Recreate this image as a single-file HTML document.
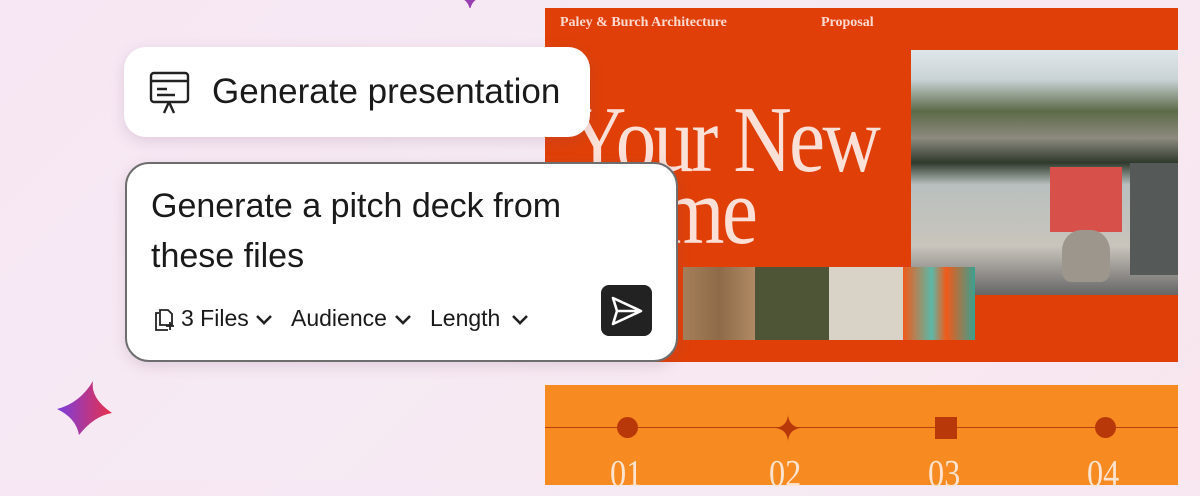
<!DOCTYPE html>
<html><head><style>
body{margin:0;width:1200px;height:480px;overflow:hidden;position:relative;background:linear-gradient(135deg,#f7e6f3 0%,#f6eaf4 40%,#f9e6ee 100%);font-family:"Liberation Sans",sans-serif}
.abs{position:absolute}
.serif{font-family:"Liberation Serif",serif}
.card{background:#fff;position:absolute;box-shadow:0 4px 14px rgba(120,80,110,.18)}
</style></head><body>
<svg class="abs" style="left:455px;top:-12px" width="30" height="20"><path d="M15 0 Q17 10 25 10 Q17 12 15 22 Q13 12 5 10 Q13 10 15 0Z" fill="#9a3fb0"/></svg>
<!-- slide -->
<div class="abs" style="left:545px;top:8px;width:633px;height:354px;background:#e04008"></div>
<div class="abs serif" style="left:560px;top:15px;color:#fbd9cf;font-size:14px;font-weight:bold">Paley &amp; Burch Architecture</div>
<div class="abs serif" style="left:821px;top:15px;color:#fbd9cf;font-size:14px;font-weight:bold">Proposal</div>
<div class="abs serif" style="left:568px;top:104px;color:#fbe0d8;font-size:94px;line-height:72px;letter-spacing:-3px;transform:scaleX(.86);transform-origin:0 0;white-space:nowrap">Your New<br>Home</div>
<div class="abs" style="left:911px;top:50px;width:267px;height:245px;background:linear-gradient(180deg,#dfe6ea 0%,#c9d3d6 12%,#5d6a48 25%,#8d8a80 36%,#2f3a2c 46%,#b9c0bf 55%,#c9c4bc 80%,#666 100%)"></div>
<div class="abs" style="left:1050px;top:167px;width:72px;height:65px;background:#d8504a"></div>
<div class="abs" style="left:1130px;top:163px;width:48px;height:112px;background:#555a58"></div>
<div class="abs" style="left:1062px;top:230px;width:48px;height:52px;background:#9c968c;border-radius:40% 40% 20% 20%"></div>
<div class="abs" style="left:683px;top:267px;width:72px;height:73px;background:linear-gradient(90deg,#a6805a,#8e6a48,#b08a65)"></div>
<div class="abs" style="left:755px;top:267px;width:74px;height:73px;background:#4e5436"></div>
<div class="abs" style="left:829px;top:267px;width:74px;height:73px;background:#d9d2c6"></div>
<div class="abs" style="left:903px;top:267px;width:72px;height:73px;background:linear-gradient(90deg,#f05a1a,#5cb8a8 40%,#f05a1a 60%,#3aa090)"></div>
<!-- bottom slide -->
<div class="abs" style="left:545px;top:385px;width:633px;height:100px;background:#f78a20"></div>
<div class="abs" style="left:545px;top:427px;width:633px;height:1px;background:#b8400c"></div>
<div class="abs" style="left:617px;top:417px;width:21px;height:21px;border-radius:50%;background:#b8380a"></div>
<svg class="abs" style="left:776px;top:415px" width="24" height="26"><path d="M12 0 Q13 11 24 13 Q13 15 12 26 Q11 15 0 13 Q11 11 12 0Z" fill="#b8380a"/></svg>
<div class="abs" style="left:935px;top:417px;width:22px;height:22px;background:#b8380a"></div>
<div class="abs" style="left:1095px;top:417px;width:21px;height:21px;border-radius:50%;background:#b8380a"></div>
<div class="abs serif" style="left:610px;top:452px;color:#fde3d0;font-size:38px;transform:scaleX(.85);transform-origin:0 0">01</div>
<div class="abs serif" style="left:769px;top:452px;color:#fde3d0;font-size:38px;transform:scaleX(.85);transform-origin:0 0">02</div>
<div class="abs serif" style="left:928px;top:452px;color:#fde3d0;font-size:38px;transform:scaleX(.85);transform-origin:0 0">03</div>
<div class="abs serif" style="left:1087px;top:452px;color:#fde3d0;font-size:38px;transform:scaleX(.85);transform-origin:0 0">04</div>
<!-- card 1 -->
<div class="card" style="left:124px;top:47px;width:466px;height:90px;border-radius:22px"></div>
<svg class="abs" style="left:149px;top:71px" width="42" height="44" fill="none" stroke="#222" stroke-width="2.4"><rect x="2" y="2" width="37" height="29" rx="3"/><path d="M2 10H39M8 18H18M8 24H26M20 31L15 42M20 31L25 42"/></svg>
<div class="abs" style="left:212px;top:72px;font-size:35px;color:#1a1a1a">Generate presentation</div>
<!-- card 2 -->
<div class="card" style="left:125px;top:162px;width:549px;height:196px;border-radius:24px;border:2px solid #6e6e6e"></div>
<div class="abs" style="left:151px;top:181px;font-size:34px;line-height:50px;color:#1a1a1a">Generate a pitch deck from<br>these files</div>
<svg class="abs" style="left:153px;top:308px" width="24" height="24" fill="none" stroke="#222" stroke-width="1.8"><path d="M6 5H3V22H15M7 2H15L19 6V17H7Z M17 14V22M13 18H21"/></svg>
<div class="abs" style="left:181px;top:305px;font-size:23px;color:#1a1a1a">3 Files</div>
<div class="abs" style="left:291px;top:305px;font-size:23px;color:#1a1a1a">Audience</div>
<div class="abs" style="left:430px;top:305px;font-size:23px;color:#1a1a1a">Length</div>
<svg class="abs" style="left:255px;top:314px" width="18" height="12" fill="none" stroke="#222" stroke-width="2.6"><path d="M2 2L9 9L16 2"/></svg>
<svg class="abs" style="left:394px;top:314px" width="18" height="12" fill="none" stroke="#222" stroke-width="2.6"><path d="M2 2L9 9L16 2"/></svg>
<svg class="abs" style="left:511px;top:314px" width="18" height="12" fill="none" stroke="#222" stroke-width="2.6"><path d="M2 2L9 9L16 2"/></svg>
<div class="abs" style="left:601px;top:285px;width:51px;height:51px;background:#222;border-radius:8px"></div>
<svg class="abs" style="left:601px;top:285px" width="51" height="51" fill="none" stroke="#fff" stroke-width="2.6" stroke-linejoin="round"><path d="M12 13L40 26L12 39L16 26Z M16 26H40"/></svg>
<!-- sparkle -->
<svg class="abs" style="left:54px;top:378px" width="60" height="60"><defs><linearGradient id="g" x1="0" y1="0" x2="1" y2="0"><stop offset="0" stop-color="#7a3ee0"/><stop offset="1" stop-color="#e8304a"/></linearGradient></defs><path d="M39 3 Q36 20 58 35 Q40 38 25 57 Q22 40 3 31 Q26 25 39 3Z" fill="url(#g)"/></svg>
</body></html>
